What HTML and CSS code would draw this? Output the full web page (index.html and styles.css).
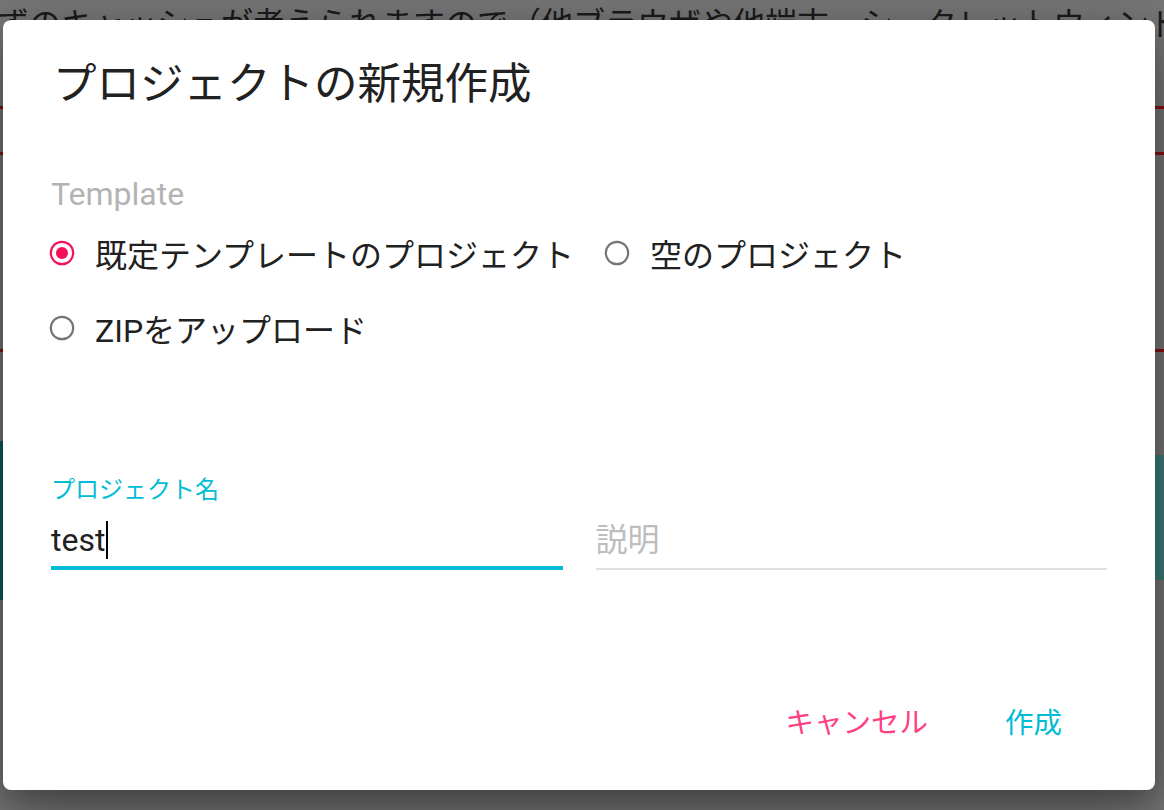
FILE: index.html
```html
<!DOCTYPE html>
<html lang="ja">
<head>
  <meta charset="UTF-8" />
  <meta name="viewport" content="width=device-width, initial-scale=1.0"/>
  <title>プロジェクトの新規作成</title>
  <link rel="stylesheet" href="styles.css">
</head>
<body>
  <div class="page">
    <p class="bg-text">ずのキャッシュが考えられますので（他ブラウザや他端末、シークレットウィンドウで表示さ</p>
    <div class="rule rule-1"></div>
    <div class="rule rule-2"></div>
    <div class="rule rule-3"></div>
    <div class="media">
      <div class="media-left"></div>
      <div class="media-right"></div>
    </div>
  </div>

  <div class="dialog">
    <h3 class="dialog-title">プロジェクトの新規作成</h3>

    <div class="template-label">Template</div>
    <div class="radio-group">
      <label class="radio checked">
        <svg class="radio-icon" width="26" height="26" viewBox="0 0 26 26">
          <circle cx="13" cy="13" r="11.2" fill="none" stroke="currentColor" stroke-width="2.2"/>
          <circle cx="13" cy="13" r="6" fill="currentColor"/>
        </svg>
        <span>既定テンプレートのプロジェクト</span>
      </label>
      <label class="radio">
        <svg class="radio-icon" width="26" height="26" viewBox="0 0 26 26">
          <circle cx="13" cy="13" r="11.2" fill="none" stroke="currentColor" stroke-width="2.2"/>
        </svg>
        <span>空のプロジェクト</span>
      </label>
      <label class="radio">
        <svg class="radio-icon" width="26" height="26" viewBox="0 0 26 26">
          <circle cx="13" cy="13" r="11.2" fill="none" stroke="currentColor" stroke-width="2.2"/>
        </svg>
        <span>ZIPをアップロード</span>
      </label>
    </div>

    <div class="fields">
      <div class="field focused">
        <div class="field-label">プロジェクト名</div>
        <div class="field-input">test<span class="caret"></span></div>
        <div class="field-line"></div>
      </div>
      <div class="field">
        <div class="field-label"></div>
        <div class="field-input placeholder">説明</div>
        <div class="field-line"></div>
      </div>
    </div>

    <div class="actions">
      <button type="button" class="btn btn-cancel">キャンセル</button>
      <button type="button" class="btn btn-create">作成</button>
    </div>
  </div>
</body>
</html>
```

FILE: styles.css
```css
:root {
  --texto: #212121;
  --cinza: #b3b3b3;
  --ciano: #00bcd4;
  --rosa: #ff4081;
  --radio: #f5105a;
}

* {
  box-sizing: border-box;
}

body {
  margin: 0;
  width: 1164px;
  height: 810px;
  overflow: hidden;
  position: relative;
  background-color: #767676;
  font-family: Roboto, "Noto Sans CJK JP", sans-serif;
  color: var(--texto);
}

/* pagina atras do overlay */
.page {
  height: 100%;
  overflow: hidden;
}

.bg-text {
  margin: 0 0 0 -3px;
  padding-top: 4px;
  height: 40px;
  font-size: 32px;
  line-height: 40px;
  white-space: nowrap;
  overflow: hidden;
  color: #1b1b1b;
}

.rule {
  height: 3px;
  background-color: #8a1010;
}

.rule-1 { margin-top: 66px; }
.rule-2 { margin-top: 43px; }
.rule-3 { margin-top: 194px; }

.media {
  margin-top: 89px;
  height: 159px;
  display: flex;
  justify-content: space-between;
}

.media-left {
  width: 6px;
  background-color: #0f5c57;
}

.media-right {
  width: 12px;
  margin: 14px 0 20px;
  background-color: #3f7d78;
}

/* dialog */
.dialog {
  position: absolute;
  left: 3px;
  top: 20px;
  width: 1152px;
  height: 770px;
  background-color: #fff;
  border-radius: 8px;
  box-shadow: 0 24px 70px rgba(0,0,0,0.35), 0 12px 24px rgba(0,0,0,0.2);
  padding: 35px 48px 34px;
  display: flex;
  flex-direction: column;
}

.dialog-title {
  margin: 0;
  font-size: 43.5px;
  line-height: 52px;
  font-weight: 400;
  font-family: "Noto Sans CJK JP", sans-serif;
  padding-left: 2px;
}

.template-label {
  margin-top: 69px;
  font-size: 32px;
  line-height: 36px;
  color: var(--cinza);
}

.radio-group {
  margin-top: 17px;
  display: flex;
  flex-wrap: wrap;
  gap: 27px 32px;
}

.radio {
  display: flex;
  align-items: center;
  height: 48px;
  gap: 20px;
  font-size: 32px;
  cursor: pointer;
}

.radio-icon {
  color: #757575;
  flex: none;
  margin-left: -2px;
}

.radio.checked .radio-icon {
  color: var(--radio);
}

.fields {
  margin-top: 123px;
  display: grid;
  grid-template-columns: 1fr 1fr;
  gap: 33px;
}

.field-label {
  height: 30px;
  font-size: 24px;
  line-height: 30px;
  color: var(--ciano);
}

.field-input {
  margin-top: 13px;
  height: 44px;
  font-size: 32px;
  line-height: 44px;
  display: flex;
  align-items: center;
}

.field-input.placeholder {
  color: #bdbdbd;
}

.caret {
  width: 1.5px;
  height: 38px;
  background-color: #000;
  margin-left: 1px;
}

.field-line {
  margin-top: 6px;
  height: 2px;
  background-color: #e0e0e0;
}

.field.focused .field-line {
  margin-top: 4px;
  height: 4px;
  background-color: var(--ciano);
}

.actions {
  margin-top: auto;
  margin-right: 13px;
  display: flex;
  justify-content: flex-end;
  gap: 13px;
}

.btn {
  height: 72px;
  padding: 0 32px;
  border: none;
  background: none;
  font-family: "Noto Sans CJK JP", sans-serif;
  font-size: 28.5px;
  cursor: pointer;
}

.btn-cancel {
  color: var(--rosa);
}

.btn-create {
  color: var(--ciano);
}
```
